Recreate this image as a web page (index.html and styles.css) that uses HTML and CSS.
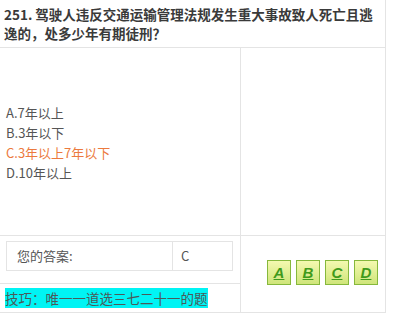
FILE: index.html
```html
<!DOCTYPE html>
<html lang="zh-CN">
<head>
<meta charset="utf-8">
<link rel="stylesheet" href="styles.css">
</head>
<body>
<div class="sheet">
  <div class="title">251. 驾驶人违反交通运输管理法规发生重大事故致人死亡且逃逸的，处多少年有期徒刑？</div>
  <div class="options">
    <div class="opt">A.7年以上</div>
    <div class="opt">B.3年以下</div>
    <div class="opt opt-right">C.3年以上7年以下</div>
    <div class="opt">D.10年以上</div>
  </div>
  <div class="blank"></div>
  <div class="answer-cell">
    <div class="answer-box">
      <div class="answer-label">您的答案:</div>
      <div class="answer-value">C</div>
    </div>
  </div>
  <div class="buttons">
    <a class="btn">A</a>
    <a class="btn">B</a>
    <a class="btn">C</a>
    <a class="btn">D</a>
  </div>
  <div class="tip-cell"><span class="tip">技巧：唯一一道选三七二十一的题</span></div>
</div>
</body>
</html>
```
FILE: styles.css
```css
html, body {
  margin: 0;
  padding: 0;
  background: #ffffff;
}
body {
  font-family: "Noto Sans CJK SC", "Noto Sans", sans-serif;
  color: #555555;
}
.sheet {
  width: 386px;
  display: grid;
  grid-template-columns: 241px 145px;
  grid-template-rows: 48px 188px 48px 29px;
  border-right: 1px solid #e4e4e4;
  box-sizing: border-box;
}
.title {
  grid-column: 1 / 3;
  box-sizing: border-box;
  border-bottom: 1px solid #e4e4e4;
  padding: 5px 4px 0 4px;
  font-size: 13.5px;
  font-weight: bold;
  line-height: 19px;
  color: #3a3a3a;
}
.options {
  box-sizing: border-box;
  border-right: 1px solid #e4e4e4;
  border-bottom: 1px solid #e4e4e4;
  display: flex;
  flex-direction: column;
  justify-content: center;
  padding: 2px 0 0 6px;
  font-size: 13px;
  line-height: 20px;
}
.opt-right {
  color: #ec7a3e;
}
.blank {
  border-bottom: 1px solid #e4e4e4;
}
.answer-cell {
  box-sizing: border-box;
  border-right: 1px solid #e4e4e4;
  border-bottom: 1px solid #e4e4e4;
  padding: 5px 0 0 6px;
}
.answer-box {
  width: 227px;
  height: 30px;
  box-sizing: border-box;
  border: 1px solid #e4e4e4;
  display: grid;
  grid-template-columns: 166px 1fr;
  font-size: 13px;
  line-height: 28px;
}
.answer-label {
  border-right: 1px solid #e4e4e4;
  padding-left: 10px;
}
.answer-value {
  padding-left: 8px;
}
.buttons {
  grid-column: 2;
  grid-row: 3 / 5;
  border-bottom: 1px solid #e4e4e4;
  display: flex;
  justify-content: flex-end;
  align-items: center;
  gap: 5px;
  padding-right: 8px;
  padding-bottom: 3px;
}
.btn {
  width: 24px;
  height: 25px;
  box-sizing: border-box;
  border: 1px solid #86b83c;
  background: linear-gradient(#f4f9b0, #cfe57a);
  display: flex;
  align-items: center;
  justify-content: center;
  font-family: "Liberation Sans", Arial, sans-serif;
  font-size: 15px;
  font-weight: bold;
  font-style: italic;
  text-decoration: underline;
  color: #3f9a1c;
}
.tip-cell {
  box-sizing: border-box;
  border-right: 1px solid #e4e4e4;
  border-bottom: 1px solid #e4e4e4;
  padding: 5px 0 0 5px;
  font-size: 13.5px;
  line-height: 18px;
}
.tip {
  background: #00f4f4;
  color: #4a5a5a;
}
```
